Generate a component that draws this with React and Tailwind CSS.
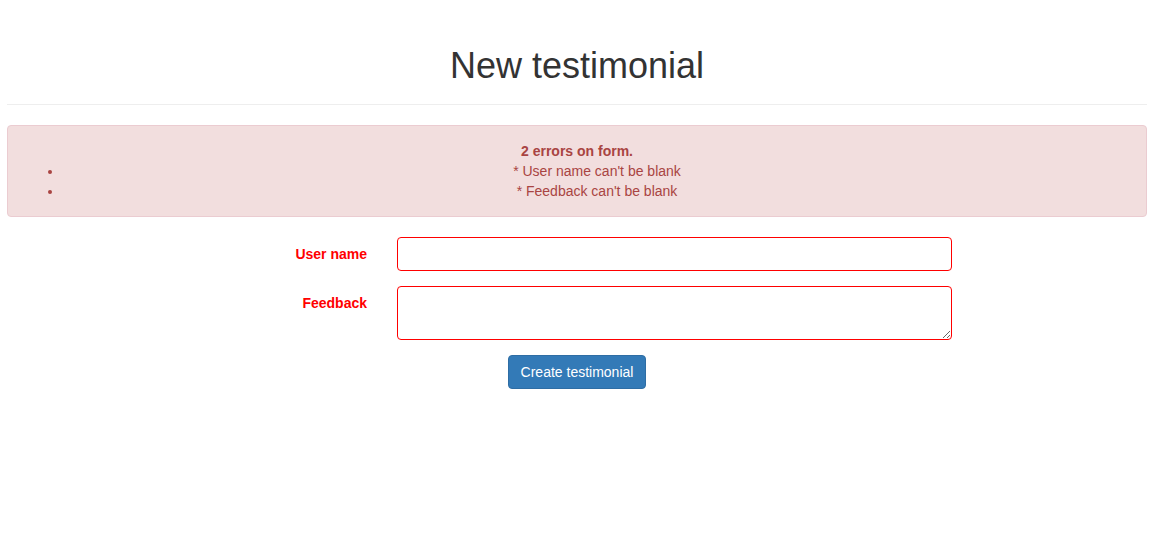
import React from "react";

const errors = ["User name can't be blank", "Feedback can't be blank"];

const App = () => {
  return (
    <div className="min-h-screen bg-white pl-[7px] pr-[4px] text-[14px] leading-[20px] text-[#333] font-['Liberation_Sans',Arial,sans-serif]">
      <div className="pt-[46px] pb-[9px] mb-[20px] border-b border-[#eee]">
        <h1 className="text-center text-[36px] leading-[39.6px] font-normal mb-[9px]">
          New testimonial
        </h1>
      </div>

      <div className="mb-[20px] p-[15px] border border-[#ebccd1] bg-[#f2dede] text-[#a94442] rounded-[4px]">
        <p className="text-center font-bold">{errors.length} errors on form.</p>
        <ul className="list-disc pl-[40px]">
          {errors.map((err) => (
            <li key={err} className="text-center">
              * {err}
            </li>
          ))}
        </ul>
      </div>

      <form className="flex flex-col gap-[15px]">
        <div className="flex">
          <label className="w-[360px] shrink-0 text-right pt-[7px] font-bold text-[#f00]">
            User name
          </label>
          <input
            type="text"
            className="ml-[30px] w-[555px] h-[34px] px-[12px] border border-[#f00] rounded-[4px] outline-none"
          />
        </div>
        <div className="flex">
          <label className="w-[360px] shrink-0 text-right pt-[7px] font-bold text-[#f00]">
            Feedback
          </label>
          <textarea className="ml-[30px] w-[555px] h-[54px] px-[12px] py-[6px] border border-[#f00] rounded-[4px] outline-none" />
        </div>
        <div className="flex justify-center">
          <button
            type="button"
            className="h-[34px] px-[12px] bg-[#337ab7] border border-[#2e6da4] rounded-[4px] text-white"
          >
            Create testimonial
          </button>
        </div>
      </form>
    </div>
  );
};

export default App;
